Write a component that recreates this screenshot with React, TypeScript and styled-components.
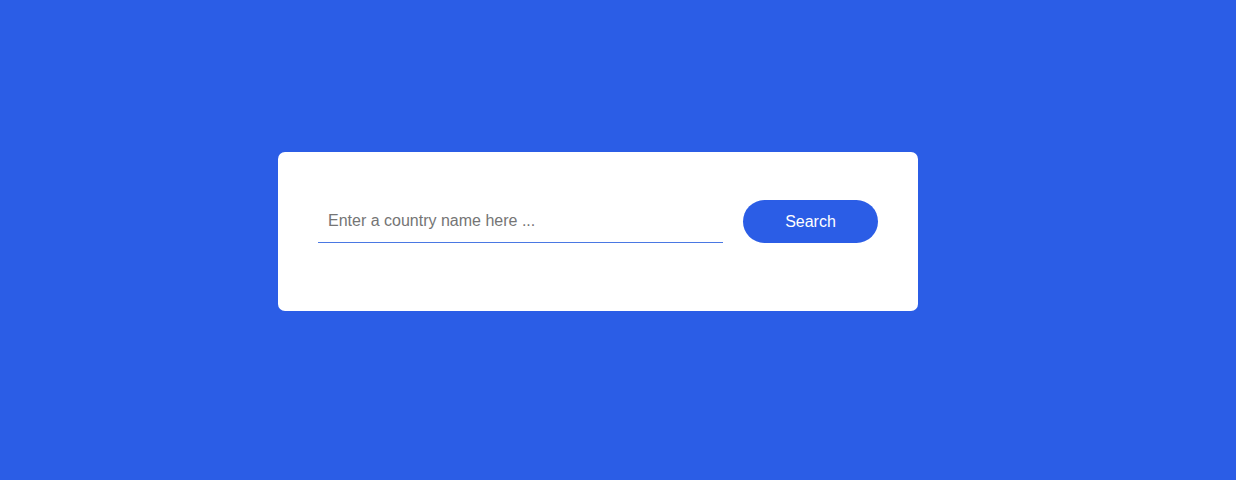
import React from "react";
import styled, { createGlobalStyle } from "styled-components";

const Global = createGlobalStyle`
  html, body { margin: 0; padding: 0; }
  body { background: #2b5de6; font-family: "Liberation Sans", Arial, sans-serif; }
`;

const Page = styled.div`
  width: 1236px;
  height: 480px;
  box-sizing: border-box;
  display: flex;
  justify-content: center;
  align-items: center;
  padding-right: 40px;
  padding-bottom: 17px;
`;

const Card = styled.form`
  width: 640px;
  box-sizing: border-box;
  background: #ffffff;
  border-radius: 7px;
  padding: 48px 40px 68px;
  display: flex;
  align-items: stretch;
  gap: 20px;
`;

const Input = styled.input`
  flex: 1;
  height: 43px;
  box-sizing: border-box;
  border: none;
  border-bottom: 1px solid #4a78e3;
  outline: none;
  padding: 0 10px;
  font-family: "Liberation Sans", Arial, sans-serif;
  font-size: 16px;
  color: #333;
  background: transparent;
  &::placeholder { color: #757575; }
`;

const Button = styled.button`
  width: 135px;
  height: 43px;
  border: none;
  border-radius: 22px;
  background: #2b5de6;
  color: #ffffff;
  font-family: "Liberation Sans", Arial, sans-serif;
  font-size: 16px;
  cursor: pointer;
`;

export default function App() {
  return (
    <>
      <Global />
      <Page>
        <Card onSubmit={(e) => e.preventDefault()}>
          <Input placeholder="Enter a country name here ..." />
          <Button type="submit">Search</Button>
        </Card>
      </Page>
    </>
  );
}
